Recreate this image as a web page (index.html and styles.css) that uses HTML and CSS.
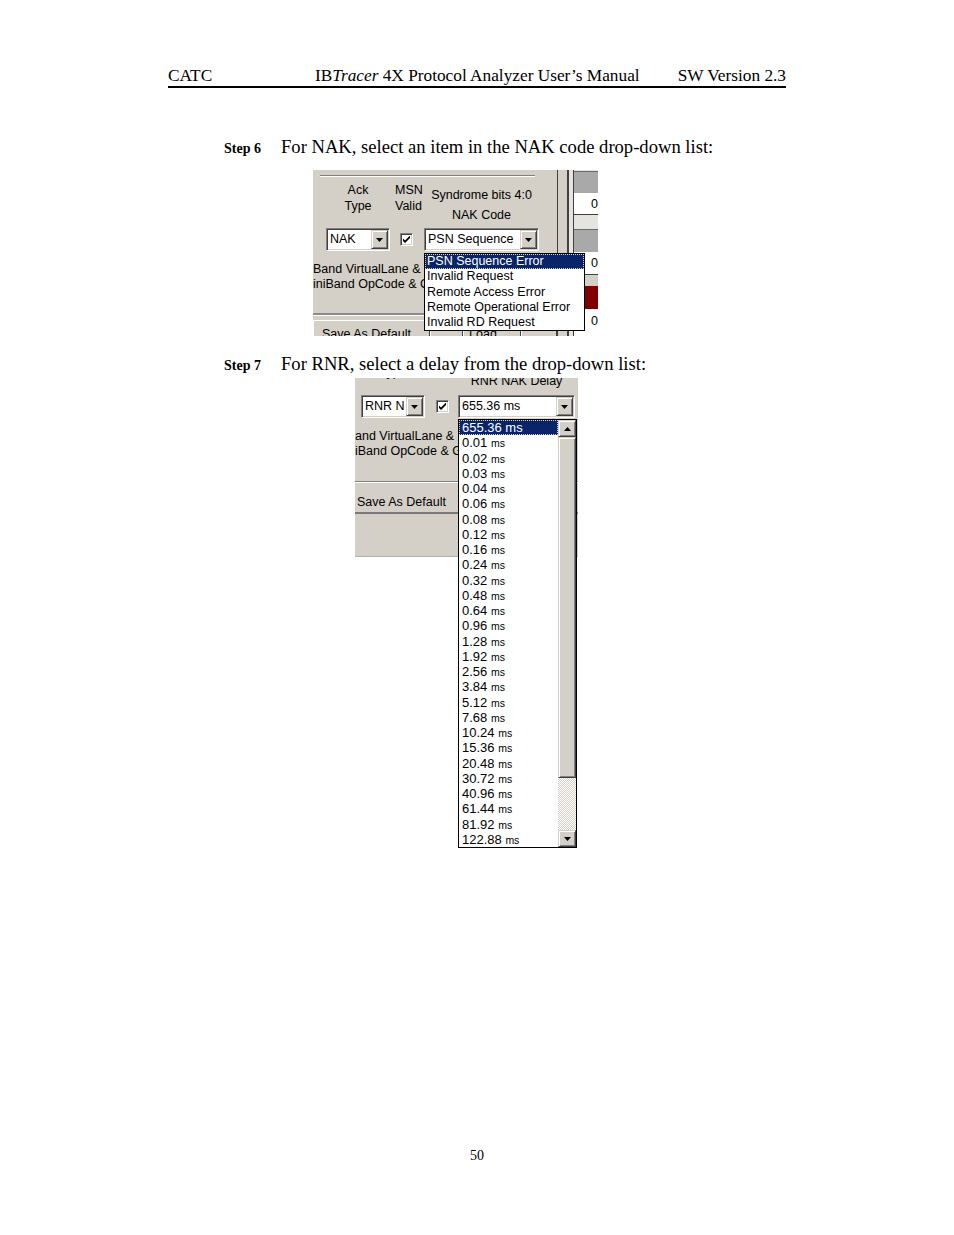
FILE: index.html
```html
<!DOCTYPE html>
<html lang="en">
<head>
<meta charset="UTF-8">
<title>IBTracer 4X Protocol Analyzer User's Manual - page 50</title>
<link rel="stylesheet" href="styles.css">
</head>
<body>
<div class="page">

<header class="running-head">
<span class="rh-left">CATC</span>
<span class="rh-title">IB<i>Tracer</i> 4X Protocol Analyzer User’s Manual</span>
<span class="rh-right">SW Version 2.3</span>
</header>

<p class="step"><span class="step-no">Step 6</span><span>For NAK, select an item in the NAK code drop-down list:</span></p>

<!-- screenshot: NAK code combo opened -->
<div class="shot shot-nak">
  <div class="form">
    <div class="etch top-etch"></div>
    <div class="heads">
      <div class="col-a">Ack<br>Type</div>
      <div class="col-b">MSN<br>Valid</div>
      <div class="col-c syn">Syndrome bits 4:0<br>NAK Code</div>
    </div>
    <div class="ctrls">
      <div class="combo col-a">
        <span class="val">NAK</span>
        <span class="drop"><svg width="7" height="4" viewBox="0 0 7 4"><path d="M0 0h7L3.5 4z"/></svg></span>
      </div>
      <div class="col-b"><span class="check"><svg width="7" height="7" viewBox="0 0 7 7"><path d="M0 2.5L2 4.5L7 -0.5V2L2 7L0 5z"/></svg></span></div>
      <div class="combo col-c">
        <span class="val">PSN Sequence</span>
        <span class="drop"><svg width="7" height="4" viewBox="0 0 7 4"><path d="M0 0h7L3.5 4z"/></svg></span>
      </div>
    </div>
    <div class="filter-txt filter1">Band VirtualLane &amp; PSN Filter<br>iniBand OpCode &amp; GRH Filter</div>
    <div class="etch low-etch"></div>
    <div class="btn-row">
      <span class="btn btn-save">Save As Default</span>
      <span class="btn btn-gap"></span>
      <span class="btn btn-load">Load</span>
      <span class="btn btn-end"></span>
    </div>
  </div>
  <div class="strip">
    <div class="rail"></div>
    <div class="rail2"></div>
    <div class="cells">
      <div class="cell grey"></div>
      <div class="cell white">0</div>
      <div class="cell gap"></div>
      <div class="cell grey tall"></div>
      <div class="cell white tall">0</div>
      <div class="cell gap short"></div>
      <div class="cell red"></div>
      <div class="cell white last">0</div>
    </div>
  </div>
  <ul class="droplist list-nak">
    <li class="sel">PSN Sequence Error</li>
    <li>Invalid Request</li>
    <li>Remote Access Error</li>
    <li>Remote Operational Error</li>
    <li>Invalid RD Request</li>
  </ul>
</div>

<p class="step step7"><span class="step-no">Step 7</span><span>For RNR, select a delay from the drop-down list:</span></p>

<!-- screenshot: RNR NAK delay combo opened -->
<div class="shot shot-rnr">
  <div class="panel">
    <div class="heads2">
      <div class="h-type">Type</div>
      <div class="h-delay">RNR NAK Delay</div>
    </div>
    <div class="ctrls2">
      <div class="combo c-rnr">
        <span class="val">RNR N</span>
        <span class="drop"><svg width="7" height="4" viewBox="0 0 7 4"><path d="M0 0h7L3.5 4z"/></svg></span>
      </div>
      <span class="check c-chk"><svg width="7" height="7" viewBox="0 0 7 7"><path d="M0 2.5L2 4.5L7 -0.5V2L2 7L0 5z"/></svg></span>
      <div class="combo c-delay">
        <span class="val">655.36 ms</span>
        <span class="drop"><svg width="7" height="4" viewBox="0 0 7 4"><path d="M0 0h7L3.5 4z"/></svg></span>
      </div>
    </div>
    <div class="filter-txt filter2">and VirtualLane &amp; PSN Filter<br>iBand OpCode &amp; GRH Filter</div>
    <div class="etch etch2"></div>
    <div class="save2">Save As Default</div>
  </div>

  <div class="droplist list-rnr">
    <ul class="opts">
      <li class="sel">655.36 ms</li>
      <li>0.01 <small>ms</small></li>
      <li>0.02 <small>ms</small></li>
      <li>0.03 <small>ms</small></li>
      <li>0.04 <small>ms</small></li>
      <li>0.06 <small>ms</small></li>
      <li>0.08 <small>ms</small></li>
      <li>0.12 <small>ms</small></li>
      <li>0.16 <small>ms</small></li>
      <li>0.24 <small>ms</small></li>
      <li>0.32 <small>ms</small></li>
      <li>0.48 <small>ms</small></li>
      <li>0.64 <small>ms</small></li>
      <li>0.96 <small>ms</small></li>
      <li>1.28 <small>ms</small></li>
      <li>1.92 <small>ms</small></li>
      <li>2.56 <small>ms</small></li>
      <li>3.84 <small>ms</small></li>
      <li>5.12 <small>ms</small></li>
      <li>7.68 <small>ms</small></li>
      <li>10.24 <small>ms</small></li>
      <li>15.36 <small>ms</small></li>
      <li>20.48 <small>ms</small></li>
      <li>30.72 <small>ms</small></li>
      <li>40.96 <small>ms</small></li>
      <li>61.44 <small>ms</small></li>
      <li>81.92 <small>ms</small></li>
      <li>122.88 <small>ms</small></li>
    </ul>
    <div class="sb">
      <span class="sb-btn"><svg width="7" height="4" viewBox="0 0 7 4"><path d="M0 4h7L3.5 0z"/></svg></span>
      <span class="sb-thumb"></span>
      <span class="sb-track"></span>
      <span class="sb-btn"><svg width="7" height="4" viewBox="0 0 7 4"><path d="M0 0h7L3.5 4z"/></svg></span>
    </div>
  </div>
</div>

<footer class="page-num">50</footer>

</div>
</body>
</html>
```

FILE: styles.css
```css
body{
    margin:0;
    background:#fff;
}

.page{
    width:954px;
    height:1235px;
    box-sizing:border-box;
    padding:66px 168px 71px;
    display:flex;
    flex-direction:column;
    font-family:"Liberation Serif", "Times New Roman", serif;
    color:#000;
}

/* running head */
.running-head{
    display:flex;
    font-size:17.3px;
    line-height:19px;
    padding-bottom:1px;
    border-bottom:2px solid #000;
}

.rh-left{
    width:147px;
}

.rh-right{
    margin-left:auto;
}

/* steps */
.step{
    display:flex;
    align-items:baseline;
    height:22px;
    margin:48px 0 0 56px;
    font-size:18.6px;
    line-height:22px;
}

.step7{
    margin-top:17px;
}

.step-no{
    width:57px;
    flex:none;
    font-size:14px;
    line-height:16px;
    font-weight:bold;
}

/* windows-ish screenshot */
.shot{
    position:relative;
    overflow:hidden;
    font-family:"Liberation Sans", Arial, sans-serif;
    font-size:12.5px;
    line-height:15px;
    color:#000;
}

.shot-nak{
    margin:12px 0 0 145px;
    width:285px;
    height:166px;
    background:#d4d0c8;
    display:grid;
    grid-template-columns:244px 41px;
}

.shot-rnr{
    margin:3px 0 0 187px;
    width:223px;
    height:470px;
}

.etch{
    height:0;
    border-top:1px solid #808080;
    border-bottom:1px solid #fff;
}

.top-etch{
    margin:5px 22px 0 7px;
}

.heads{
    display:flex;
    height:51px;
    text-align:center;
    line-height:16px;
}

.heads .col-a,
.heads .col-b{
    padding-top:5px;
}

.heads .syn{
    padding-top:8px;
    line-height:20px;
    white-space:nowrap;
}

.col-a{
    margin-left:13px;
    width:64px;
}

.col-b{
    margin-left:5px;
    width:22px;
    display:flex;
    justify-content:center;
}

.heads .col-b{
    display:block;
}

.col-c{
    margin-left:7px;
    width:115px;
}

.ctrls{
    display:flex;
    align-items:center;
    height:23px;
}

.combo{
    height:23px;
    box-sizing:border-box;
    display:flex;
    align-items:center;
    padding:1px;
    background:#fff;
    border:1px solid;
    border-color:#808080 #fff #fff #808080;
    box-shadow:inset 1px 1px #404040, inset -1px -1px #d4d0c8;
}

.combo .val{
    flex:1;
    padding-left:2px;
    white-space:nowrap;
    overflow:hidden;
}

.drop,
.sb-btn{
    width:17px;
    height:19px;
    box-sizing:border-box;
    display:flex;
    align-items:center;
    justify-content:center;
    background:#d4d0c8;
    border:1px solid;
    border-color:#d4d0c8 #404040 #404040 #d4d0c8;
    box-shadow:inset 1px 1px #fff, inset -1px -1px #808080;
}

.check{
    width:13px;
    height:13px;
    box-sizing:border-box;
    display:flex;
    align-items:center;
    justify-content:center;
    background:#fff;
    border:1px solid;
    border-color:#808080 #fff #fff #808080;
    box-shadow:inset 1px 1px #404040, inset -1px -1px #d4d0c8;
}

.filter-txt{
    margin-top:11px;
    white-space:nowrap;
    overflow:hidden;
}

.filter1{
    width:111px;
}

.filter2{
    width:103px;
}

.low-etch{
    margin-top:21px;
    width:245px;
    border-top:2px solid #8a8a8a;
}

.btn-row{
    display:flex;
    margin-top:4px;
    height:30px;
}

.btn{
    box-sizing:border-box;
    height:30px;
    padding:6px 0 0 8px;
    white-space:nowrap;
    border-left:1px solid #fff;
    border-top:1px solid #fff;
    border-right:1px solid #404040;
}

.btn-save{ width:123px; }
.btn-gap{ width:34px; }
.btn-load{ width:61px; padding-left:5px; }
.btn-end{ width:37px; }

/* right strip of the first shot */
.strip{
    display:flex;
    position:relative;
    z-index:1;
    background:#d4d0c8;
}

.rail{
    width:12px;
    border-left:1px solid #404040;
}

.rail2{
    width:6px;
    border-left:2px solid #404040;
    background:#e6e4df;
}

.cells{
    flex:1;
    display:flex;
    flex-direction:column;
    border-left:1px solid #404040;
    background:#e6e4df;
}

.cell{
    height:22px;
    box-sizing:border-box;
    flex:none;
    overflow:hidden;
    white-space:nowrap;
}

.cell.grey{
    margin-top:1px;
    background:#a9a9a9;
    border-top:1px solid #6a6a6a;
}

.cell.white{
    background:#fff;
    padding:4px 0 0 17px;
    border-bottom:1px solid #404040;
}

.cell.gap{ height:13px; }
.cell.tall{ height:23px; }
.cell.gap.short{ height:11px; background:#d4d0c8; }
.cell.red{ background:#800000; height:23px; }
.cell.last{ height:28px; padding-top:5px; }

/* opened drop-down lists */
.droplist{
    position:absolute;
    z-index:2;
    margin:0;
    padding:0;
    list-style:none;
    box-sizing:border-box;
    background:#fff;
    border:1px solid #000;
}

.droplist li{
    height:15.25px;
    line-height:15.25px;
    padding-left:2px;
    white-space:nowrap;
}

.droplist li.sel{
    background:#0a246a;
    color:#fff;
    outline:1px dotted #d8d8b0;
    outline-offset:-1px;
}

.list-nak{
    left:111px;
    top:83px;
    width:161px;
    height:78px;
}

/* second shot */
.panel{
    height:179px;
    box-sizing:border-box;
    background:#d4d0c8;
    border-bottom:1px solid #b4b2ad;
}

.heads2{
    display:flex;
    height:17px;
    align-items:flex-start;
    text-align:center;
}

.h-type{
    margin:-13px 0 0 6px;
    width:64px;
}

.h-delay{
    margin:-4px 0 0 33px;
    width:117px;
}

.ctrls2{
    display:flex;
    align-items:center;
    height:23px;
}

.c-rnr{
    margin-left:6px;
    width:64px;
}

.c-chk{
    margin-left:11px;
}

.c-delay{
    margin-left:9px;
    width:117px;
}

.filter2{
    margin-top:11px;
}

.etch2{
    margin-top:22px;
}

.save2{
    margin-top:12px;
    padding:0 0 2px 2px;
    border-bottom:2px solid #7a7a7a;
}

.list-rnr{
    left:103px;
    top:41px;
    width:119px;
    height:429px;
    display:flex;
}

.opts{
    flex:1;
    margin:0;
    padding:0;
    list-style:none;
    font-size:13px;
}

.opts li{
    padding-left:3px;
}

.opts small{
    font-size:10.5px;
}

.sb{
    width:18px;
    display:flex;
    flex-direction:column;
}

.sb-btn{
    width:18px;
    height:17px;
}

.sb-thumb{
    height:341px;
    box-sizing:border-box;
    background:#d4d0c8;
    border:1px solid;
    border-color:#d4d0c8 #404040 #404040 #d4d0c8;
    box-shadow:inset 1px 1px #fff, inset -1px -1px #808080;
}

.sb-track{
    flex:1;
    background:repeating-conic-gradient(#d4d0c8 0 25%, #fff 0 50%) 0 0/2px 2px;
}

.page-num{
    margin-top:auto;
    text-align:center;
    font-size:14px;
    line-height:16px;
}
```
